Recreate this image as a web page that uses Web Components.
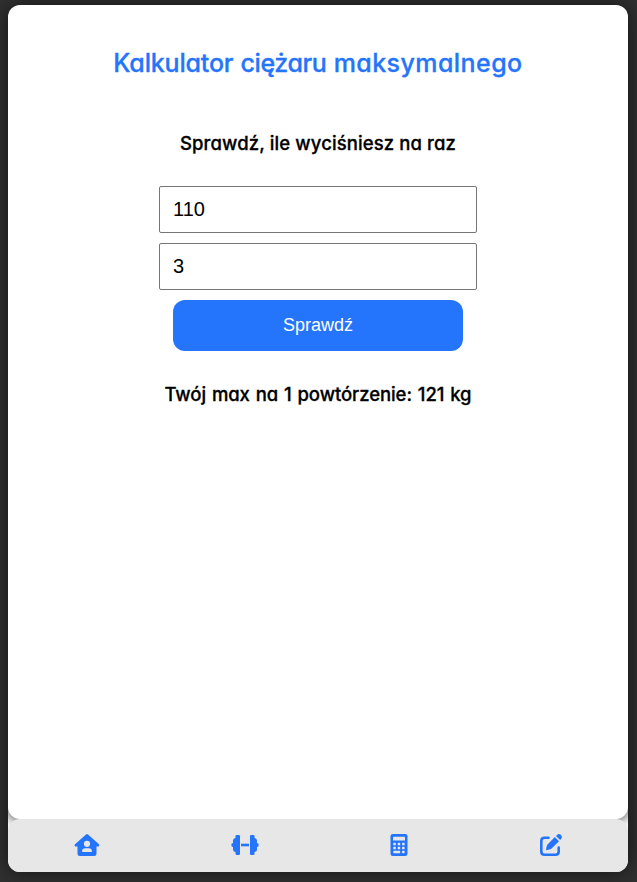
<!DOCTYPE html>
<html lang="pl">
<head>
<meta charset="utf-8">
<title>Kalkulator ciężaru maksymalnego</title>
<style>
html{height:100%}
body{margin:0;height:100%;background:#303030;font-family:Inter,"Open Sans",sans-serif;overflow:hidden}
</style>
</head>
<body>
<app-shell>
  <max-calculator></max-calculator>
  <nav-bar slot="nav">
    <nav-icon kind="home"></nav-icon>
    <nav-icon kind="dumbbell"></nav-icon>
    <nav-icon kind="calculator"></nav-icon>
    <nav-icon kind="edit"></nav-icon>
  </nav-bar>
</app-shell>
<script>
class Base extends HTMLElement{
  connectedCallback(){
    if(this.shadowRoot)return;
    this.attachShadow({mode:'open'}).innerHTML=this.view();
  }
}
customElements.define('app-shell',class extends Base{
  view(){return `<style>
:host{display:block;height:100%;box-sizing:border-box;padding:5px 9px 10px 8px;overflow:hidden}
.frame{height:100%;display:flex;flex-direction:column;border-radius:12px;background:#fff;box-shadow:0 0 20px rgba(0,0,0,.6);overflow:hidden}
main{flex:1;border-radius:12px;background:#fff;box-shadow:0 0 14px rgba(0,0,0,.9)}
</style><div class="frame"><main><slot></slot></main><slot name="nav"></slot></div>`}
});
customElements.define('number-field',class extends Base{
  view(){return `<style>
:host{display:block;width:318px;height:47px}
input{box-sizing:border-box;width:100%;height:100%;margin:0;padding:0 13px;border:1px solid #767676;border-radius:2px;background:#fff;color:#000;font:20px "Liberation Sans",Arial,sans-serif;outline:0;display:block}
</style><input type="text" inputmode="numeric" value="${this.getAttribute('value')}">`}
});
customElements.define('max-calculator',class extends Base{
  view(){return `<style>
:host{display:flex;flex-direction:column;align-items:center;font-feature-settings:"cv11"}
h1,h2,p{margin:0;white-space:nowrap;font-weight:500;-webkit-text-stroke:.3px currentColor}
h1{margin-top:39px;height:38px;line-height:38px;font-size:25px;color:#2575fc;word-spacing:.5px}
h2,p{font-size:18.5px;line-height:28px;height:28px;color:#000}
h2{margin-top:47px}
p{margin-top:29px;word-spacing:1px}
form{margin:29px 0 0;display:flex;flex-direction:column;align-items:center;gap:10px}
button{width:290px;height:51px;border:0;padding:0;border-radius:12px;background:#2575fc;color:#fff;font:18px "Liberation Sans",Arial,sans-serif}
</style>
<h1><span data-w="120">Kalkulator</span> <span data-w="86">ciężaru</span> <span data-w="189">maksymalnego</span></h1>
<h2><span data-w="276">Sprawdź, ile wyciśniesz na raz</span></h2>
<form><number-field value="110"></number-field><number-field value="3"></number-field><button type="button">Sprawdź</button></form>
<p><span data-w="307">Twój max na 1 powtórzenie: 121 kg</span></p>`}
  connectedCallback(){
    super.connectedCallback();
    // Track each run of heading text to its design width.
    for(const s of this.shadowRoot.querySelectorAll('[data-w]')){
      const d=(s.dataset.w-s.getBoundingClientRect().width)/s.textContent.length;
      s.style.letterSpacing=d.toFixed(3)+'px';
    }
  }
});
customElements.define('nav-bar',class extends Base{
  view(){return `<style>
:host{position:relative;display:grid;grid-template-columns:157px 160px 148px 155px;height:53px;box-sizing:border-box;padding-bottom:2px;background:#e7e7e7;border-radius:12px 12px 0 0}
</style><slot></slot>`}
});
const icons={
home:'<path fill="currentColor" fill-rule="evenodd" d="M14 2.500Q15 1.700 16 2.500L27 12.200Q28.200 14 26.300 14.500H24.500V21.500Q24.500 24 22 24H8Q5.500 24 5.500 21.500V14.500H3.700Q1.800 14 3 12.200ZM15 8.700A3.100 3.100 0 1 0 15 14.900A3.100 3.100 0 1 0 15 8.700ZM13.300 16.200Q10.200 16.400 10 19.200Q10 20 10.800 20H19.200Q20 20 20 19.200Q19.800 16.400 16.700 16.200Z"/>',
dumbbell:'<g fill="currentColor"><rect x="5.500" y="3" width="4.500" height="20" rx="1.300"/><rect x="20" y="3" width="4.500" height="20" rx="1.300"/><path d="M6 6H5.200Q3 6.500 3 8.500V11Q1.300 11 1.300 13Q1.300 15 3 15V17.500Q3 19.500 5.200 20H6ZM24 6H24.800Q27 6.500 27 8.500V11Q28.700 11 28.700 13Q28.700 15 27 15V17.500Q27 19.500 24.800 20H24Z"/><rect x="11" y="11.700" width="8" height="2.600"/></g>',
calculator:'<rect x="6.500" y="2" width="17" height="22" rx="2.300" fill="currentColor"/><g fill="#e7e7e7"><rect x="9" y="4.800" width="12" height="3.800" rx=".4"/><rect x="9.300" y="10.800" width="2.500" height="2.500" rx=".6"/><rect x="13.700" y="10.800" width="2.500" height="2.500" rx=".6"/><rect x="18.100" y="10.800" width="2.500" height="2.500" rx=".6"/><rect x="9.300" y="14.800" width="2.500" height="2.500" rx=".6"/><rect x="13.700" y="14.800" width="2.500" height="2.500" rx=".6"/><rect x="18.100" y="14.800" width="2.500" height="2.500" rx=".6"/><rect x="9.300" y="18.800" width="6.900" height="2.400" rx=".6"/><rect x="18.100" y="18.800" width="2.500" height="2.400" rx=".6"/></g>',
edit:'<path fill="none" stroke="currentColor" stroke-width="2.600" stroke-linecap="round" d="M12.500 5.700H8.500Q5.300 5.700 5.300 8.900V19.500Q5.300 22.700 8.500 22.700H19.500Q22.700 22.700 22.700 19.500V15.500"/><path fill="currentColor" d="M18.800 5L23 9.200L15 17.100Q14.200 17.700 10 18.300Q10.400 13.900 11.300 12.700ZM20 4L21.300 2.700Q23.200 1.300 25 3.100Q26.900 5 25.300 6.800L24.100 8Z"/>'
};
customElements.define('nav-icon',class extends Base{
  view(){return `<style>:host{display:flex;align-items:center;justify-content:center;color:#2575fc}svg{width:30px;height:26px;display:block}</style><svg viewBox="0 0 30 26">${icons[this.getAttribute('kind')]}</svg>`}
});
</script>
</body>
</html>
